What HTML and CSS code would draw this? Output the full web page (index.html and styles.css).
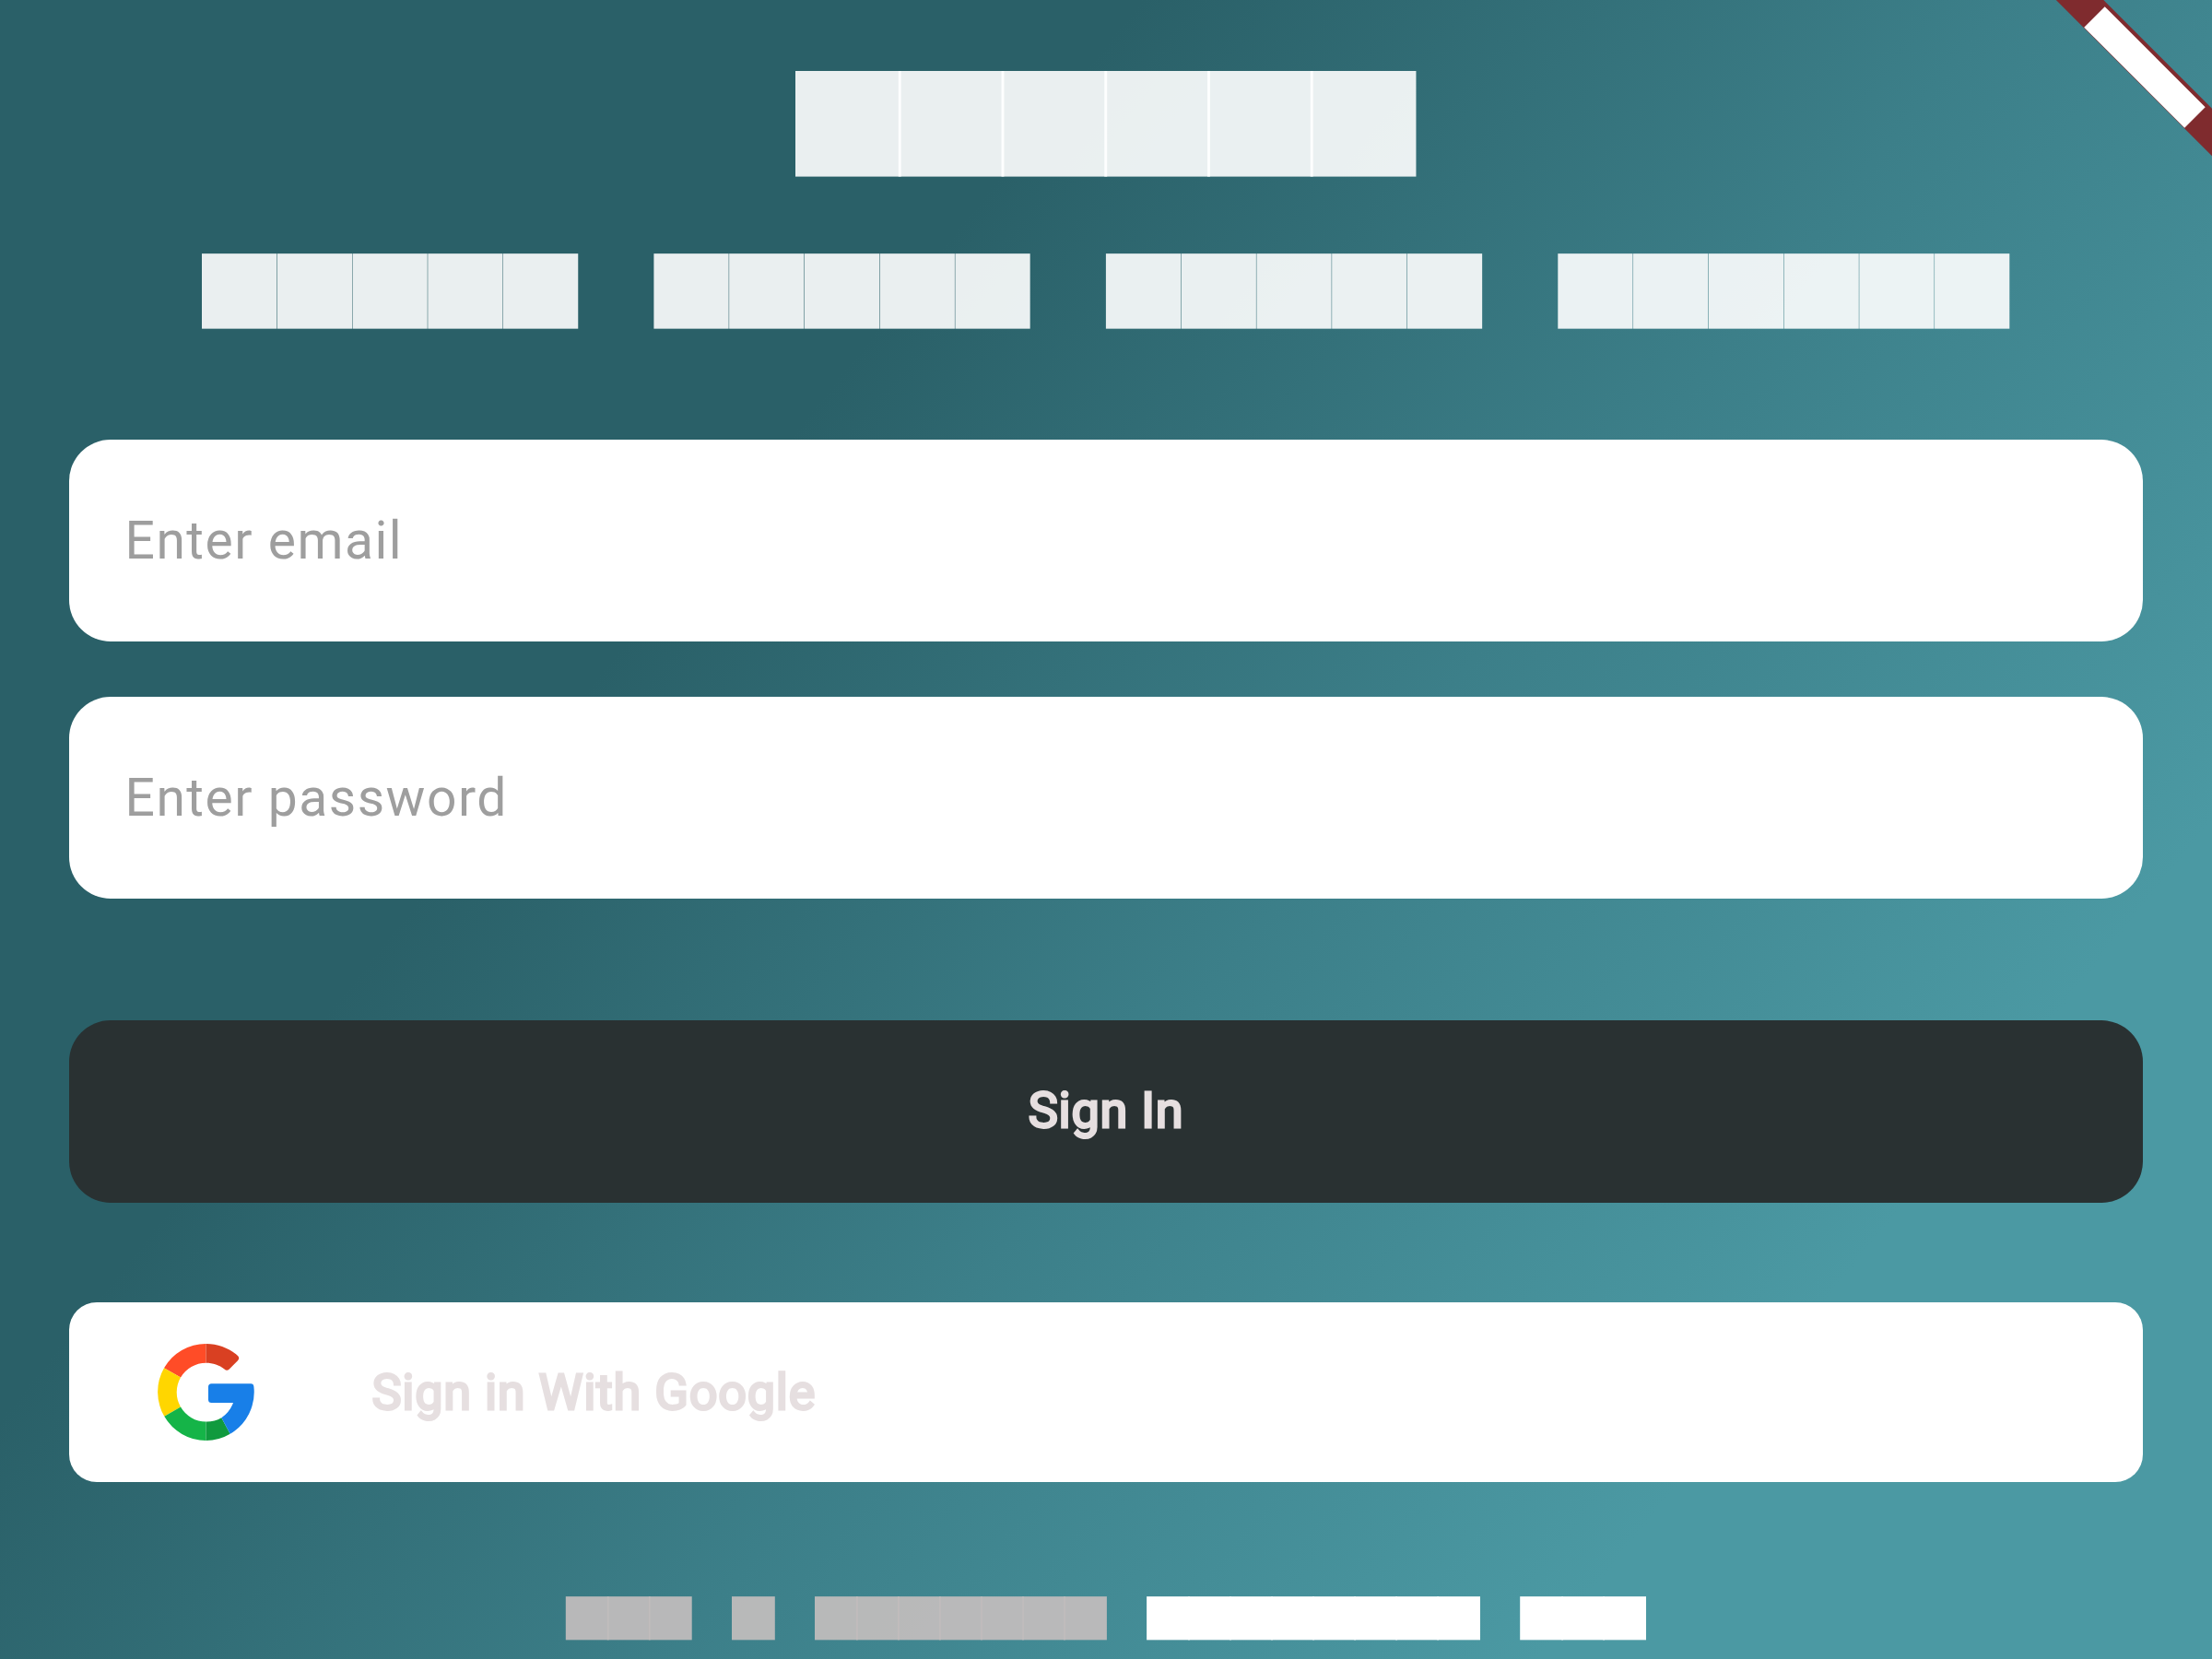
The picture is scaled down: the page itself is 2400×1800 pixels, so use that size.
FILE: index.html
```html
<!DOCTYPE html>
<html lang="en">
<head>
<meta charset="utf-8">
<title>Sign In</title>
<link rel="stylesheet" href="styles.css">
</head>
<body>
<main class="screen">
  <svg class="blocks" width="2400" height="300" viewBox="0 70 2400 300" aria-hidden="true">
    <defs>
      <rect id="t" y="77" width="114.7" height="114.6"/>
      <rect id="s" y="275.15" width="81.25" height="81.5"/>
    </defs>
    <g class="block-light">
      <use href="#t" x="863"/><use href="#t" x="974.75"/><use href="#t" x="1086.5"/><use href="#t" x="1198.25"/><use href="#t" x="1310"/><use href="#t" x="1421.75"/>
      <use href="#s" x="219"/><use href="#s" x="300.75"/><use href="#s" x="382.5"/><use href="#s" x="464.25"/><use href="#s" x="546"/>
      <use href="#s" x="709.4"/><use href="#s" x="791.15"/><use href="#s" x="872.9"/><use href="#s" x="954.65"/><use href="#s" x="1036.4"/>
      <use href="#s" x="1199.9"/><use href="#s" x="1281.65"/><use href="#s" x="1363.4"/><use href="#s" x="1445.15"/><use href="#s" x="1526.9"/>
      <use href="#s" x="1690.3"/><use href="#s" x="1772.05"/><use href="#s" x="1853.8"/><use href="#s" x="1935.55"/><use href="#s" x="2017.3"/><use href="#s" x="2099.05"/>
    </g>
  </svg>
  <form class="form">
    <input class="field" type="text" placeholder="Enter email" aria-label="Email">
    <input class="field" type="password" placeholder="Enter password" aria-label="Password">
    <button class="submit" type="button"><span class="submit-label">Sign In</span></button>
    <button class="google" type="button">
      <svg class="google-logo" viewBox="0 0 105 105" aria-hidden="true">
        <path fill="#ff4c27" d="M52.5 0A52.5 52.5 0 0 0 7 26.3L25 36.5A31.8 31.8 0 0 1 52.5 20.7Z"/>
        <path fill="#d94022" d="M52.5 0C66 0 78 5 87 13Q89.500 15.500 87 18.200L77.500 27.700Q75 30 72.500 27.500C67 23 60 20.700 52.5 20.700Z"/>
        <path fill="#ffd600" d="M7 26.300A52.5 52.5 0 0 0 7.300 78.800L25 68.500A32 32 0 0 1 25 36.500Z"/>
        <path fill="#15b448" d="M7.300 78.800A52.5 52.5 0 0 0 52.500 105V84.500A32 32 0 0 1 25 68.500Z"/>
        <path fill="#109a3e" d="M52.500 105A52.500 52.500 0 0 0 78.700 97.700L69.300 80.200A32 32 0 0 1 52.500 84.500Z"/>
        <path fill="#187fe8" d="M58.500 43.300H101.200Q104 43.300 104.400 46.500A52.500 52.500 0 0 1 78.700 97.700L69.300 80.200A33 33 0 0 0 82 64H58.500Q55 64 55 60.500V46.800Q55 43.300 58.500 43.300Z"/>
      </svg>
      <span class="google-label">Sign in With Google</span>
    </button>
  </form>
  <svg class="blocks" width="2400" height="76" viewBox="0 1724 2400 76" aria-hidden="true">
    <defs><rect id="f" y="1732.15" width="46.8" height="47.2"/></defs>
    <g class="block-muted">
      <use href="#f" x="613.8"/><use href="#f" x="658.8"/><use href="#f" x="703.9"/>
      <use href="#f" x="794"/>
      <use href="#f" x="884"/><use href="#f" x="929"/><use href="#f" x="974"/><use href="#f" x="1019"/><use href="#f" x="1064.100"/><use href="#f" x="1109.100"/><use href="#f" x="1154.100"/>
    </g>
    <g class="block-white">
      <use href="#f" x="1244.100"/><use href="#f" x="1289.100"/><use href="#f" x="1334.100"/><use href="#f" x="1379.100"/><use href="#f" x="1424.200"/><use href="#f" x="1469.200"/><use href="#f" x="1514.200"/><use href="#f" x="1559.200"/>
      <use href="#f" x="1649.200"/><use href="#f" x="1694.200"/><use href="#f" x="1739.200"/>
    </g>
  </svg>
  <svg class="banner" viewBox="0 0 200 200" aria-hidden="true">
    <path class="banner-band" d="M30.800 0H82.300L200 117.700V169.200Z"/>
    <path class="banner-text" d="M83.700 7.300L192.700 116.300L170.200 138.800L61.200 29.800Z"/>
  </svg>
</main>
</body>
</html>
```
FILE: styles.css
```css
* { box-sizing: border-box; }
body { margin: 0; font-family: Roboto, sans-serif; }
.screen {
  position: relative;
  display: flex;
  flex-direction: column;
  justify-content: space-between;
  width: 2400px;
  height: 1800px;
  padding-top: 70px;
  overflow: hidden;
  background: linear-gradient(128.8deg, #2a6068 0%, #2a6068 32.2%, #3c7f89 56.5%, #4b99a3 81%, #4b99a3 100%);
}
.blocks { display: block; flex: none; }
.block-light { fill: #fff; }
.block-light use { fill-opacity: 0.9; }
.block-muted use { fill: #c0bcbc; fill-opacity: 0.94; }
.block-white { fill: #fff; }
.form {
  display: flex;
  flex-direction: column;
  flex: 1;
  padding: 107px 75px 0;
}
.field, .submit, .google {
  flex: none;
  display: block;
  width: 100%;
  border: 0;
  font-family: inherit;
}
.field {
  height: 219px;
  margin-bottom: 60px;
  padding: 0 60.5px;
  border-radius: 45px;
  background: #fff;
  color: #222;
  font-size: 57px;
  letter-spacing: 1.5px;
}
.field::placeholder { color: #9e9e9e; opacity: 1; }
.submit {
  height: 198px;
  margin-top: 72px;
  padding-bottom: 4px;
  border-radius: 45px;
  background: #293132;
}
.submit-label, .google-label {
  color: #e6dfe0;
  font-size: 54px;
  font-weight: 400;
  letter-spacing: 0.75px;
  -webkit-text-stroke: 2.8px #e6dfe0;
}
.google {
  display: flex;
  align-items: center;
  gap: 127.5px;
  height: 195px;
  margin-top: 108px;
  padding: 0 96px;
  border-radius: 30px;
  background: #fff;
}
.google-logo { width: 105px; height: 105px; }
.google-label { padding-bottom: 1px; }
.banner {
  position: absolute;
  top: 0;
  right: 0;
  width: 200px;
  height: 200px;
}
.banner-band { fill: #7f2b2e; }
.banner-text { fill: #fff; }
```
